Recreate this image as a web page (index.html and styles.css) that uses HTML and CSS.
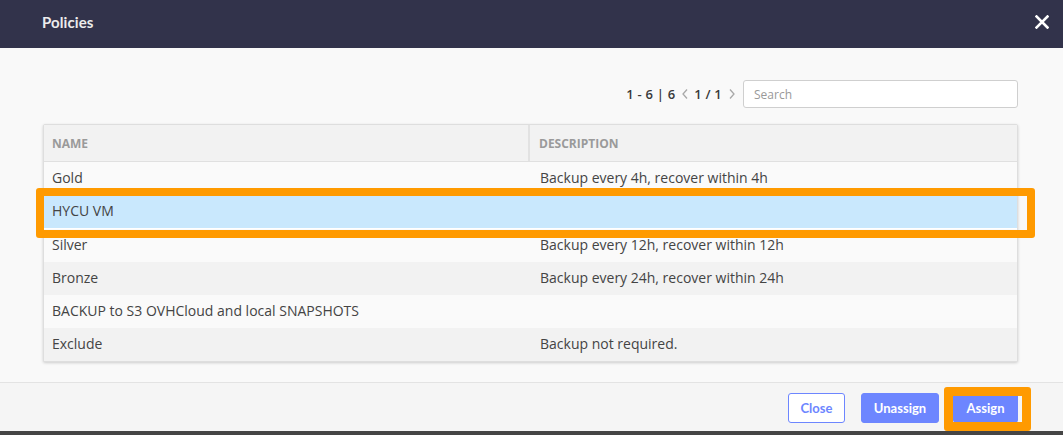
FILE: index.html
```html
<!DOCTYPE html>
<html>
<head>
<meta charset="utf-8">
<title>Policies</title>
<link rel="stylesheet" href="styles.css">
</head>
<body>
<div class="modal">
  <div class="header">
    <span class="title">Policies</span>
    <svg class="close-x" width="14" height="14" viewBox="0 0 14 14"><path d="M1.5 1.5 L12.5 12.5 M12.5 1.5 L1.5 12.5" stroke="#ffffff" stroke-width="2.6" stroke-linecap="square"/></svg>
  </div>
  <div class="content">
    <div class="toolbar">
      <span class="pager">1 - 6 | 6</span>
      <svg class="chev" width="8" height="12" viewBox="0 0 8 12"><path d="M6 1.5 L2 6 L6 10.5" fill="none" stroke="#a8a8a8" stroke-width="1.3"/></svg>
      <span class="pager">1 / 1</span>
      <svg class="chev" width="8" height="12" viewBox="0 0 8 12"><path d="M2 1.5 L6 6 L2 10.5" fill="none" stroke="#a8a8a8" stroke-width="1.3"/></svg>
      <input class="search" type="text" placeholder="Search">
    </div>
    <div class="table">
      <div class="row head">
        <div class="cell c1">NAME</div>
        <div class="cell c2">DESCRIPTION</div>
      </div>
      <div class="row light">
        <div class="cell c1">Gold</div>
        <div class="cell c2">Backup every 4h, recover within 4h</div>
      </div>
      <div class="row selected">
        <div class="cell c1">HYCU VM</div>
        <div class="cell c2"></div>
        <div class="hl hl-row"></div>
      </div>
      <div class="row light">
        <div class="cell c1">Silver</div>
        <div class="cell c2">Backup every 12h, recover within 12h</div>
      </div>
      <div class="row dark">
        <div class="cell c1">Bronze</div>
        <div class="cell c2">Backup every 24h, recover within 24h</div>
      </div>
      <div class="row light">
        <div class="cell c1">BACKUP to S3 OVHCloud and local SNAPSHOTS</div>
        <div class="cell c2"></div>
      </div>
      <div class="row dark">
        <div class="cell c1">Exclude</div>
        <div class="cell c2">Backup not required.</div>
      </div>
    </div>
  </div>
  <div class="footer">
    <button class="btn outline">Close</button>
    <button class="btn solid unassign">Unassign</button>
    <button class="btn solid assign">Assign<span class="hl hl-btn"></span></button>
  </div>
  <div class="strip"></div>
</div>
</body>
</html>
```
FILE: styles.css
```css
* { box-sizing: border-box; }
html, body { margin: 0; padding: 0; }
body {
  width: 1063px;
  height: 435px;
  overflow: hidden;
  background: #f9f9f9;
  font-family: "Open Sans", "Liberation Sans", sans-serif;
}
.modal {
  display: flex;
  flex-direction: column;
  height: 435px;
}
.header {
  height: 48px;
  flex: none;
  background: #32334b;
  display: flex;
  align-items: center;
  justify-content: space-between;
  padding: 0 14px 0 42px;
}
.title {
  font-family: Lato, "Liberation Sans", sans-serif;
  font-weight: 700;
  font-size: 15px;
  color: #ececec;
  margin-top: -4px;
  letter-spacing: 0.1px;
}
.close-x { margin-top: -4px; }
.content {
  flex: 1;
  padding: 32px 45px 0 43px;
  background: #f9f9f9;
}
.toolbar {
  display: flex;
  justify-content: flex-end;
  align-items: center;
  height: 28px;
}
.pager {
  font-size: 13px;
  font-weight: 600;
  color: #3a3a3a;
  letter-spacing: 0.2px;
}
.chev { margin: 0 5px 0 6px; }
.chev:last-of-type { margin-right: 7px; }
.search {
  width: 275px;
  height: 28px;
  border: 1px solid #cfcfcf;
  border-radius: 3px;
  background: #fff;
  padding: 0 10px;
  font-family: "Open Sans", "Liberation Sans", sans-serif;
  font-size: 12px;
  color: #333;
  outline: none;
}
.search::placeholder { color: #999; }
.table {
  margin-top: 16px;
  border: 1px solid #dedede;
  border-radius: 2px;
  box-shadow: 0 1px 3px rgba(0,0,0,0.18);
  background: #fafafa;
}
.row {
  display: flex;
  height: 33px;
  align-items: center;
  position: relative;
  font-size: 14px;
  color: #444;
  padding-bottom: 3px;
}
.row.head {
  height: 37px;
  padding-bottom: 0;
  background: #f2f2f2;
  border-bottom: 1px solid #e0e0e0;
  font-size: 12px;
  font-weight: 700;
  color: #9a9a9a;
}
.row.head .c1 { border-right: 2px solid #e2e2e2; height: 100%; display: flex; align-items: center; }
.row.light { background: #fafafa; }
.row.dark { background: #f2f2f2; }
.row.selected { background: #c9e8fd; border-bottom: 1px solid #fff; height: 34px; z-index: 2; }
.cell { padding-left: 8px; }
.c1 { width: 486px; flex: none; }
.c2 { flex: 1; }
.row .c2 { padding-left: 9px; }
.row:not(.head) .c2 { padding-left: 10px; }
.hl {
  position: absolute;
  border: 8px solid #ff9a00;
  border-radius: 3px;
  pointer-events: none;
  z-index: 3;
}
.hl-row {
  left: -8px;
  top: -7px;
  width: 999px;
  height: 50px;
}
.footer {
  height: 49px;
  flex: none;
  border-top: 1px solid #e3e3e3;
  background: #f5f5f5;
  display: flex;
  justify-content: flex-end;
  align-items: flex-start;
  padding: 10px 45px 0 0;
  gap: 16px;
}
.btn {
  height: 30px;
  border-radius: 3px;
  font-family: Lato, "Liberation Sans", sans-serif;
  font-weight: 700;
  font-size: 13px;
  padding: 0;
  cursor: pointer;
  position: relative;
}
.btn.outline {
  width: 57px;
  background: #fff;
  border: 1px solid #6d86ff;
  color: #6d86ff;
}
.btn.solid {
  background: #6d86ff;
  border: 1px solid #6d86ff;
  color: #fff;
}
.btn.unassign { width: 78px; }
.btn.assign { width: 65px; margin-left: -2px; }
.hl-btn {
  left: -10px;
  top: -7px;
  width: 87px;
  height: 44px;
  border-width: 9px;
}
.strip {
  height: 4px;
  flex: none;
  background: #454545;
}
```
